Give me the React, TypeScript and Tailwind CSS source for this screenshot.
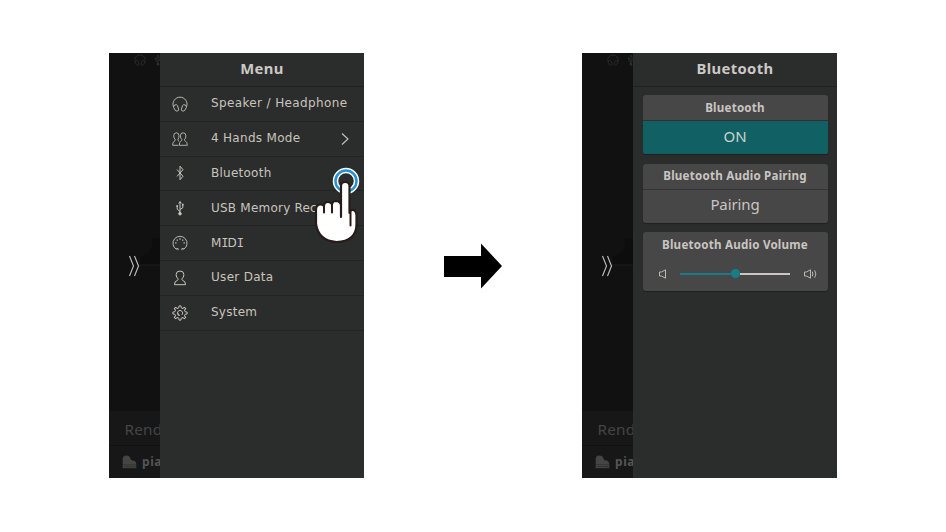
import React from "react";

const sans = "font-['Noto_Sans','Open_Sans',sans-serif]";

type IconProps = { className?: string };

function Headphones({ className = "h-4 w-4" }: IconProps) {
  return (
    <svg viewBox="0 0 16 16" className={className} fill="none" stroke="currentColor" strokeWidth="0.9">
      <path d="M1.400 10.500A7 7 0 1 1 14.600 10.500" />
      <path d="M3.200 14.300L1.600 11.400Q1.200 9.600 3 8.900Q4.800 8.200 5.500 9.700L6.600 13.200Q6.800 15 5.200 15Q4 15.300 3.200 14.300ZM12.800 14.300L14.400 11.400Q14.800 9.600 13 8.900Q11.200 8.200 10.500 9.700L9.400 13.200Q9.200 15 10.800 15Q12 15.300 12.800 14.300Z" />
    </svg>
  );
}

function People() {
  return (
    <svg viewBox="0 0 16 16" className="h-4 w-4" fill="none" stroke="currentColor" strokeWidth="0.85">
      <path d="M6.500 14.300H.7Q.6 11.400 2 10.400Q3.500 9.700 3.200 8.500Q1.700 7 1.700 4.800Q1.700 1.800 4.400 1.800Q7 1.800 7 4.800Q7 7 5.900 8.500Q5.700 9.700 7.200 10.400" />
      <path d="M9.800 8.500Q8.400 7 8.400 4.800Q8.400 1.800 11.100 1.800Q13.900 1.800 13.900 4.800Q13.900 7.100 12.600 8.500Q12.200 9.700 13.500 10.300Q15.300 11.100 15.300 14.300H7.300Q7.200 11.200 8.700 10.400Q10.100 9.700 9.800 8.500Z" />
    </svg>
  );
}

function Bluetooth() {
  return (
    <svg viewBox="0 0 16 16" className="h-4 w-4" fill="none" stroke="currentColor" strokeWidth="1">
      <path d="M5 4.500L11 11.300L8 14.700V1.200L11 4.700L5 11.400" />
    </svg>
  );
}

function Usb({ className = "h-4 w-4" }: IconProps) {
  return (
    <svg viewBox="0 0 16 16" className={className} fill="none" stroke="currentColor" strokeWidth="1">
      <path d="M8 13V2M6.800 3.500L8 1.500L9.200 3.500M8 11.600L5.200 9.200V5.700M8 9.500L10.800 7.800V5" />
      <circle cx="8" cy="13.700" r="1.300" fill="currentColor" />
      <path d="M4.300 6h1.800M10 4.700h1.600" strokeWidth="1.700" />
    </svg>
  );
}

function Midi() {
  return (
    <svg viewBox="0 0 16 16" className="h-4 w-4" fill="none" stroke="currentColor" strokeWidth="0.9">
      <path d="M6.100 15.200V13.600H4.400V14.300A7 7 0 1 1 11.600 14.300V13.600H9.900V15.200" />
      <path d="M3.200 7.900h1.300M11.500 7.900h1.300M4.600 5.100h1.300M10.100 5.100h1.300M7.400 4h1.200" strokeWidth="1.300" />
    </svg>
  );
}

function User() {
  return (
    <svg viewBox="0 0 16 16" className="h-4 w-4" fill="none" stroke="currentColor" strokeWidth="1">
      <path d="M6.100 8.900Q4.100 7.200 4.100 4.700Q4.100 1 8 1T11.900 4.700Q11.900 7.200 9.900 8.900Q9.600 9.900 10.600 10.300Q13.700 11.200 13.500 14.700H2.500Q2.300 11.200 5.400 10.300Q6.400 9.900 6.100 8.900Z" />
    </svg>
  );
}

function Gear() {
  return (
    <svg viewBox="0 0 16 16" className="h-4 w-4" fill="none" stroke="currentColor" strokeWidth="0.950" strokeLinejoin="round">
      {[0, 45, 90, 135, 180, 225, 270, 315].map((a) => (
        <path key={a} transform={`rotate(${a} 8 8)`} d="M6.100 3.200L6.800 2.800L7 .9H9L9.200 2.800L10 3.200" />
      ))}
      <path d="M6.300 10A2.600 2.600 0 1 1 9.900 9.900M6.200 8.200V10.300H8" />
    </svg>
  );
}

function Piano() {
  return (
    <svg viewBox="0 0 15 14" className="h-[14px] w-[15px]" fill="#454545">
      <path d="M.7 9.500V4Q.7 .500 4.300 .500Q7.800 .500 8.500 3.800Q8.900 5.500 11 5.600Q14.300 5.900 14.300 9.500Z" />
      <path d="M.7 9.500h13.600v3.700H.7Z" />
      <path d="M3 10.800v1.500M5 10.800v1.500M7 10.800v1.500M9 10.800v1.500M11 10.800v1.500M12.700 10.800v1.500" stroke="#171717" strokeWidth=".6" />
    </svg>
  );
}

function Backdrop() {
  return (
    <div className="flex w-[51px] shrink-0 flex-col overflow-hidden bg-[#111111]">
      <div className="flex h-[14px] items-center gap-[6px] pl-[25px] text-[#343434]">
        <Headphones className="h-[12px] w-[12px] shrink-0" />
        <Usb className="h-[12px] w-[12px] shrink-0" />
      </div>
      <svg viewBox="0 0 51 344" className="h-[344px] w-[51px] shrink-0" fill="none">
        <path d="M51 171H43V177Q43 186 31 190V198H51Z" fill="#0d0d0d" />
        <path d="M28 198H51" stroke="#1d1d1d" />
        <path d="M20.500 189L24.500 199L20.500 209M25.500 189L29.500 199L25.500 209" stroke="#bdbdbd" strokeWidth="1.150" />
      </svg>
      <div className="flex h-[35px] shrink-0 items-center border-b border-[#111] bg-[#171717] pt-[2px] pl-[15.500px]">
        <span className="text-[15.300px] tracking-[0.200px] text-[#454545]">Rend</span>
      </div>
      <div className="flex h-[32px] items-center gap-[5px] bg-[#171717] pl-[13px]">
        <span className="shrink-0"><Piano /></span>
        <span className="text-[12px] font-bold tracking-[0.600px] text-[#555]">pia</span>
      </div>
    </div>
  );
}

function Phone({ title, children }: { title: string; children: React.ReactNode }) {
  return (
    <section className="relative flex h-[425px] w-[255px] overflow-hidden bg-[#2b2d2c]">
      <Backdrop />
      <div className="flex w-[204px] flex-col">
        <h1 className="flex h-[34px] items-center justify-center border-b border-[#202221] pb-[2px] text-[14.800px] font-bold tracking-[0.350px] text-[#cbc9c6]">
          {title}
        </h1>
        {children}
      </div>
    </section>
  );
}

const items: { label: string; icon: React.ReactNode; style: string; arrow?: boolean }[] = [
  { label: "Speaker / Headphone", icon: <Headphones />, style: "tracking-[0.370px]" },
  { label: "4 Hands Mode", icon: <People />, style: "tracking-[0.300px]", arrow: true },
  { label: "Bluetooth", icon: <Bluetooth />, style: "tracking-[0.250px]" },
  { label: "USB Memory Rec", icon: <Usb />, style: "tracking-[0.220px]" },
  { label: "MIDI", icon: <Midi />, style: "" },
  { label: "User Data", icon: <User />, style: "tracking-[0.300px]" },
  { label: "System", icon: <Gear />, style: "tracking-[0.250px]" },
];

function Label({ text }: { text: string }) {
  return (
    <>
      {text.split(/(I)/).map((part, i) =>
        part === "I" ? (
          <span key={i} className="font-['DejaVu_Sans_Mono',monospace] tracking-[-1.200px]">I</span>
        ) : (
          part
        ),
      )}
    </>
  );
}

function Hand() {
  return (
    <svg viewBox="0 0 54 78" className="absolute top-[114px] left-[203px] h-[78px] w-[54px]" fill="none">
      <circle cx="34" cy="14" r="10.500" stroke="white" strokeWidth="5.500" />
      <circle cx="34" cy="14" r="10.500" stroke="#2493d5" strokeWidth="2.500" />
      <path d="M29 50V19Q29 15 33.200 15T37.500 19V46Q38 43 40.500 43Q44 43 44.500 48V57Q44.500 74.500 24.500 75Q6.500 74 4 57V42Q4.500 37.500 8.500 37.500Q10.500 37.500 12 39Q12 35 16 35Q18.500 35 20 37Q20.500 34 24 34Q28.500 34.500 29 38Z" fill="white" stroke="#271c1a" strokeWidth="2.200" strokeLinejoin="round" />
      <path d="M12 39V45.500M20 37.500V45.500M29 37V45.500M38.500 43V58.500" stroke="#271c1a" strokeWidth="2" strokeLinecap="round" />
    </svg>
  );
}

function MenuScreen() {
  return (
    <Phone title="Menu">
      <ul>
        {items.map((item) => (
          <li key={item.label} className="flex h-[34.800px] items-center border-b border-[#222423] pl-[12px] text-[#c9c3bd]">
            <span className="w-[39px]">{item.icon}</span>
            <span className={`w-[132px] whitespace-nowrap pb-px font-['DejaVu_Sans',sans-serif] text-[12px] ${item.style}`}>
              <Label text={item.label} />
            </span>
            {item.arrow && (
              <svg viewBox="0 0 8 12" className="-ml-[2px] h-3 w-2" fill="none" stroke="currentColor" strokeWidth="1.100">
                <path d="M1 .5L7 6L1 11.500" />
              </svg>
            )}
          </li>
        ))}
      </ul>
      <Hand />
    </Phone>
  );
}

function Speaker({ loud = false }: { loud?: boolean }) {
  return (
    <svg viewBox="0 0 14 10" className="h-[10px] w-[14px]" fill="none" stroke="#c8c4c0" strokeWidth=".9">
      <path d="M1.500 3H3.500L7.500 .8V9.200L3.500 7H1.500Z" />
      {loud && <path d="M9.300 2.700Q10.500 5 9.300 7.300M11.700 1.300Q14 5 11.700 8.700" />}
    </svg>
  );
}

function Card({ title, children }: { title: string; children: React.ReactNode }) {
  return (
    <article className="flex h-[59px] flex-col overflow-hidden rounded-[3px] bg-[#474747] shadow-[0_1px_1px_#202020]">
      <h2 className="flex h-[25px] shrink-0 items-center justify-center text-[11.600px] font-bold tracking-[0.220px] text-[#c9c5c1]">
        {title}
      </h2>
      {children}
    </article>
  );
}

function BluetoothScreen() {
  return (
    <Phone title="Bluetooth">
      <div className="flex flex-col gap-[9.200px] px-[9.500px] pt-[8.400px]">
        <Card title="Bluetooth">
          <button className="flex flex-1 items-center justify-center border-t border-[#303030] pb-[3px] bg-[#116164] text-[15px] text-[#cad2cf]">ON</button>
        </Card>
        <Card title="Bluetooth Audio Pairing">
          <button className="flex flex-1 items-center justify-center border-t border-[#343434] pb-[3px] text-[15px] tracking-[-0.100px] text-[#c9c5c1]">Pairing</button>
        </Card>
        <Card title="Bluetooth Audio Volume">
          <div className="flex h-[34px] items-center pl-[15px]">
            <Speaker />
            <div className="ml-[8px] flex w-[110px] items-center">
              <span className="h-[1.500px] w-[51px] bg-[#187d87]" />
              <span className="h-[9px] w-[9px] rounded-full bg-[#187d87]" />
              <span className="h-[1.500px] flex-1 bg-[#c9c5c1]" />
            </div>
            <span className="ml-[13px]"><Speaker loud /></span>
          </div>
        </Card>
      </div>
    </Phone>
  );
}

export default function App() {
  return (
    <main className={`flex h-[532px] w-[946px] items-start overflow-hidden bg-white pt-[53px] pl-[109px] ${sans}`}>
      <MenuScreen />
      <div className="flex h-[425px] w-[218px] items-center justify-center">
        <svg viewBox="0 0 58 46" className="h-[46px] w-[58px]">
          <path d="M0 13H37V.500L58 23L37 45.500V34H0Z" />
        </svg>
      </div>
      <BluetoothScreen />
    </main>
  );
}
